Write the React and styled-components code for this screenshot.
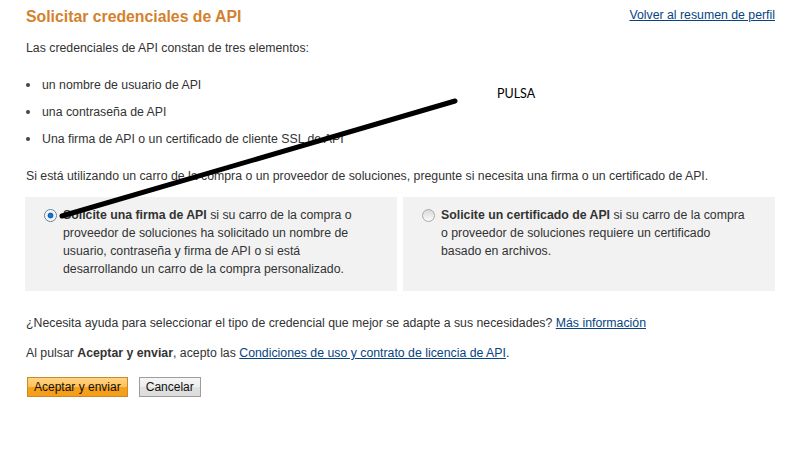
import React from "react";
import styled, { createGlobalStyle } from "styled-components";

const Global = createGlobalStyle`
  html, body { margin: 0; padding: 0; background: #fff; }
  body { font-family: "Liberation Sans", Arial, sans-serif; color: #333; font-size: 12.3px; line-height: 18px; }
`;

const Page = styled.div`
  position: relative;
  width: 750px;
  padding: 6px 0 40px 25px;
`;

const Header = styled.div`
  display: flex;
  justify-content: space-between;
  align-items: flex-start;
`;

const Title = styled.h1`
  margin: 0 0 0 1px;
  font-size: 15.8px;
  line-height: 22px;
  font-weight: bold;
  color: #d5812c;
`;

const Link = styled.a`
  color: #084482;
  text-decoration: underline;
  cursor: pointer;
`;

const Para = styled.p`
  margin: ${(p) => p.$mt || 0}px 0 0 1px;
`;

const List = styled.ul`
  list-style: none;
  margin: 19px 0 0 0;
  padding: 0;
`;

const Item = styled.li`
  position: relative;
  padding-left: 17px;
  margin-bottom: 9px;
  &:last-child { margin-bottom: 0; }
  &::before {
    content: "";
    position: absolute;
    left: 1px;
    top: 7px;
    width: 4px;
    height: 4px;
    border-radius: 50%;
    background: #444;
  }
`;

const Choices = styled.div`
  display: grid;
  grid-template-columns: 372px 372px;
  gap: 6px;
  margin-top: 12px;
`;

const Choice = styled.label`
  display: flex;
  align-items: flex-start;
  gap: 6px;
  background: #f2f2f2;
  padding: 9px 24px 13px 19px;
  min-height: 72px;
`;

const Radio = styled.span`
  flex: none;
  width: 11px;
  height: 11px;
  margin-top: 3px;
  border-radius: 50%;
  border: 1px solid ${(p) => (p.$checked ? "#6b7f95" : "#a8a8a8")};
  background: ${(p) =>
    p.$checked
      ? "radial-gradient(circle at 50% 50%, #1f7fd8 0, #0b5fb0 2.4px, #dfe7ef 3.2px, #fff 5px)"
      : "linear-gradient(#d9d9d9, #fbfbfb)"};
  box-sizing: content-box;
`;

const ChoiceText = styled.span`
  display: block;
`;

const Actions = styled.div`
  display: flex;
  gap: 11px;
  margin-top: 15px;
  padding-left: 2px;
`;

const Button = styled.button`
  height: 20px;
  padding: 0 6px;
  font-family: "Liberation Sans", Arial, sans-serif;
  font-size: 12px;
  color: #111;
  border: 1px solid ${(p) => (p.$primary ? "#c98a28" : "#9d9d9d")};
  background: ${(p) =>
    p.$primary
      ? "linear-gradient(#ffd384 0%, #ffc15a 48%, #f7a11d 52%, #f59d17 100%)"
      : "linear-gradient(#f6f6f6 0%, #ededed 48%, #e0e0e0 52%, #dcdcdc 100%)"};
  cursor: pointer;
  line-height: 18px;
`;

const Note = styled.span`
  position: absolute;
  left: 497px;
  top: 85px;
  font-family: Lato, "Open Sans", sans-serif;
  font-size: 12.5px;
  color: #000;
`;

const Stroke = styled.svg`
  position: absolute;
  left: 0;
  top: 0;
  pointer-events: none;
`;

export default function App() {
  return (
    <>
      <Global />
      <Page>
        <Header>
          <Title>Solicitar credenciales de API</Title>
          <Link>Volver al resumen de perfil</Link>
        </Header>
        <Para $mt={11}>Las credenciales de API constan de tres elementos:</Para>
        <List>
          <Item>un nombre de usuario de API</Item>
          <Item>una contraseña de API</Item>
          <Item>Una firma de API o un certificado de cliente SSL de API</Item>
        </List>
        <Para $mt={19}>
          Si está utilizando un carro de la compra o un proveedor de soluciones, pregunte si necesita una firma o un certificado de API.
        </Para>
        <Choices>
          <Choice>
            <Radio $checked />
            <ChoiceText>
              <b>Solicite una firma de API</b> si su carro de la compra o proveedor de soluciones ha solicitado un nombre de usuario, contraseña y firma de API o si está desarrollando un carro de la compra personalizado.
            </ChoiceText>
          </Choice>
          <Choice>
            <Radio />
            <ChoiceText>
              <b>Solicite un certificado de API</b> si su carro de la compra o proveedor de soluciones requiere un certificado basado en archivos.
            </ChoiceText>
          </Choice>
        </Choices>
        <Para $mt={23}>
          ¿Necesita ayuda para seleccionar el tipo de credencial que mejor se adapte a sus necesidades? <Link>Más información</Link>
        </Para>
        <Para $mt={12}>
          Al pulsar <b>Aceptar y enviar</b>, acepto las <Link>Condiciones de uso y contrato de licencia de API</Link>.
        </Para>
        <Actions>
          <Button $primary>Aceptar y enviar</Button>
          <Button>Cancelar</Button>
        </Actions>
        <Note>PULSA</Note>
        <Stroke width="806" height="460" viewBox="0 0 806 460">
          <line x1="62" y1="216" x2="455" y2="101" stroke="#000" strokeWidth="5" strokeLinecap="round" />
        </Stroke>
      </Page>
    </>
  );
}
